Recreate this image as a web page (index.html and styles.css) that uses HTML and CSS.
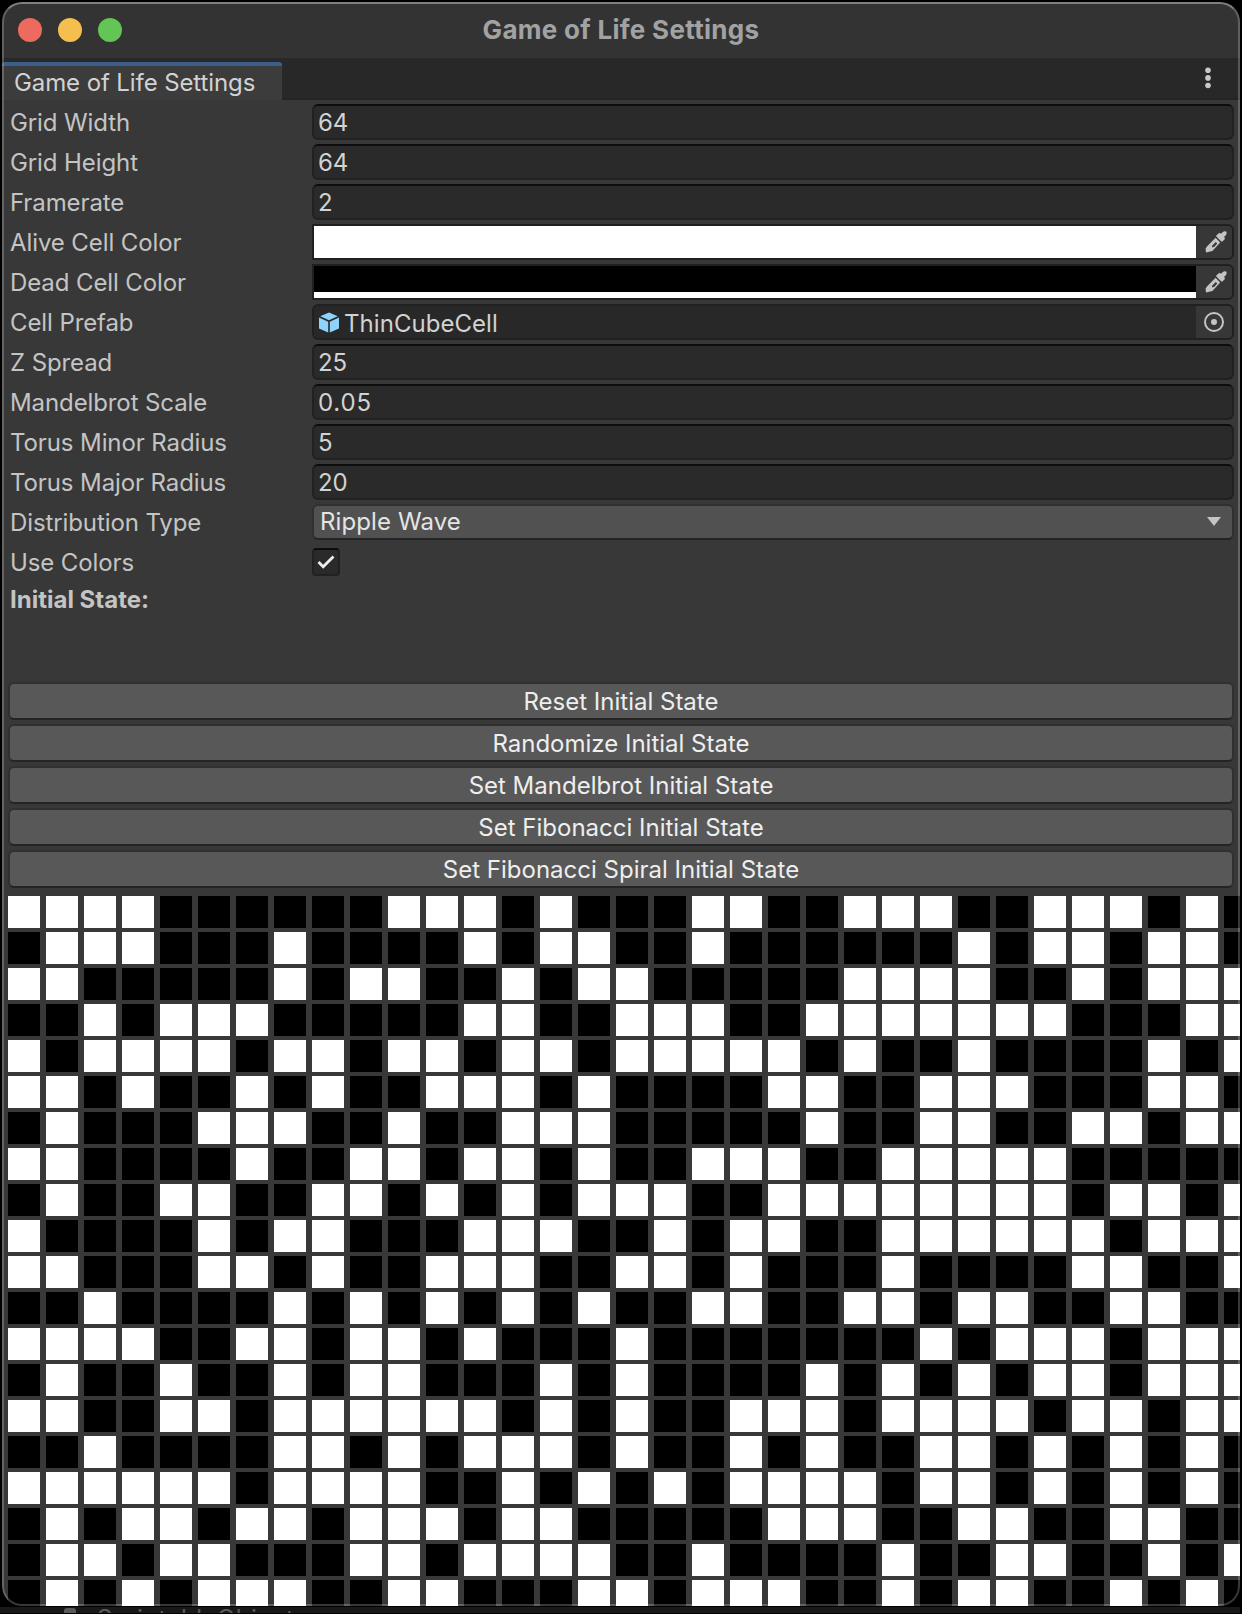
FILE: index.html
```html
<!DOCTYPE html>
<html lang="en">
<head>
<meta charset="utf-8">
<title>Game of Life Settings</title>
<link rel="stylesheet" href="styles.css">
</head>
<body>
<div class="window">
  <header class="titlebar">
    <div class="lights"><span class="light close"></span><span class="light minimize"></span><span class="light zoom"></span></div>
    <h1 class="title">Game of Life Settings</h1>
  </header>
  <nav class="tabs">
    <div class="tab">Game of Life Settings</div>
    <svg class="more" width="6" height="22" viewBox="0 0 6 22"><g fill="#c8c8c8"><circle cx="3" cy="3.3" r="2.8"/><circle cx="3" cy="10.9" r="2.8"/><circle cx="3" cy="18.5" r="2.8"/></g></svg>
  </nav>
  <main class="inspector">
    <div class="row"><label>Grid Width</label><div class="field">64</div></div>
    <div class="row"><label>Grid Height</label><div class="field">64</div></div>
    <div class="row"><label>Framerate</label><div class="field">2</div></div>
    <div class="row"><label>Alive Cell Color</label><div class="field picker"><span class="swatch alive"></span><span class="side"><svg class="dropper" width="22" height="22" viewBox="0 0 22 22"><use href="#dropper"/></svg></span></div></div>
    <div class="row"><label>Dead Cell Color</label><div class="field picker"><span class="swatch dead"></span><span class="side"><svg class="dropper" width="22" height="22" viewBox="0 0 22 22"><use href="#dropper"/></svg></span></div></div>
    <div class="row"><label>Cell Prefab</label><div class="field object">
      <svg class="cube" width="20" height="21" viewBox="0 0 20 21"><g fill="#8fd2fb"><path d="M10 0.4 18.8 4.3 10 8.2 1.2 4.3Z"/><path d="M0 5.6 9.2 9.8V20.6L0 16.6Z"/><path d="M20 5.6 10.8 9.8V20.6L20 16.6Z"/></g></svg>
      <span class="object-name">ThinCubeCell</span>
      <span class="side"><svg width="20" height="20" viewBox="0 0 20 20"><circle cx="10" cy="10" r="9" fill="none" stroke="#c4c4c4" stroke-width="2"/><circle cx="10" cy="10" r="3" fill="#c4c4c4"/></svg></span>
    </div></div>
    <div class="row"><label>Z Spread</label><div class="field">25</div></div>
    <div class="row"><label>Mandelbrot Scale</label><div class="field decimal">0.05</div></div>
    <div class="row"><label>Torus Minor Radius</label><div class="field">5</div></div>
    <div class="row"><label>Torus Major Radius</label><div class="field">20</div></div>
    <div class="row"><label>Distribution Type</label><div class="field dropdown"><span>Ripple Wave</span><svg width="14" height="9" viewBox="0 0 14 9"><path d="M0 0H14L7 9Z" fill="#c4c4c4"/></svg></div></div>
    <div class="row"><label>Use Colors</label><div class="check"><svg width="18" height="14" viewBox="0 0 18 14"><path d="M1.5 7 6.2 11.7 16.5 1.5" fill="none" stroke="#eee" stroke-width="2.8"/></svg></div></div>
    <h2 class="heading">Initial State:</h2>
    <div class="actions">
      <button>Reset Initial State</button>
      <button>Randomize Initial State</button>
      <button>Set Mandelbrot Initial State</button>
      <button>Set Fibonacci Initial State</button>
      <button>Set Fibonacci Spiral Initial State</button>
    </div>
  </main>
  <div class="cells" id="cells"></div>
</div>
<div class="behind"><span class="folder"></span><span class="asset">ScriptableObjects</span></div>
<svg class="defs" width="0" height="0"><defs><g id="dropper">
  <path d="M13.6 2.4 C14.6 1.6 15.4 2.2 16 2.8 L17.6 1.2 C18.6 0.2 20.2 0 21.2 0.8 C22 1.8 21.8 3.2 20.8 4.2 L19 6 C20 7 20.4 7.8 19.4 8.6 L18 10 C17.2 10.8 16.4 10.6 15.8 10 L11.8 6 C11 5.2 11 4.6 11.8 4Z" fill="#c4c4c4"/>
  <path d="M10.6 6.8 15.2 11.4 7.4 20 1 21.4 0.6 17.4 2.2 15.2Z M10.8 11 6.8 15 7.6 16.4 9.6 15.6 12.2 12.6Z" fill="#c4c4c4" fill-rule="evenodd"/>
</g></defs></svg>
<script src="cells.js"></script>
</body>
</html>
```
FILE: styles.css
```css
* { box-sizing: border-box; }

body {
  margin: 0;
  height: 1614px;
  padding: 2px 2px 0;
  overflow: hidden;
  background: #000;
  font-family: Inter, "Liberation Sans", sans-serif;
  font-size: 24px;
  letter-spacing: -0.1px;
  color: #c4c4c4;
}

.window {
  position: relative;
  width: 1238px;
  height: 1604px;
  display: flex;
  flex-direction: column;
  overflow: hidden;
  border-radius: 20px;
  background: #383838;
}

/* Translucent rim drawn over the window content */
.window::after {
  content: "";
  position: absolute;
  inset: 0;
  border: 2px solid rgba(255, 255, 255, 0.22);
  border-top-color: rgba(255, 255, 255, 0.38);
  border-radius: 20px;
}

.titlebar {
  display: grid;
  grid-template-columns: 1fr auto 1fr;
  align-items: center;
  flex: none;
  height: 56px;
  padding: 0 16px 2px;
  background: #333;
}

.lights { display: flex; gap: 16px; padding-top: 2px; }
.light { width: 24px; height: 24px; border-radius: 50%; }
.close { background: #ed6a5f; }
.minimize { background: #f5bf4f; }
.zoom { background: #62c555; }

.title {
  margin: 0;
  font-size: 26px;
  font-weight: 700;
  letter-spacing: 0.3px;
  color: #a2a2a2;
}

.tabs {
  display: flex;
  justify-content: space-between;
  align-items: flex-end;
  flex: none;
  height: 42px;
  background: #282828;
  box-shadow: inset 0 -2px #242424;
}

.tab {
  width: 280px;
  height: 38px;
  padding-left: 12px;
  line-height: 33px;
  border-top: 4px solid #3a5f8b;
  border-radius: 3px 3px 0 0;
  background: #3c3c3c;
  color: #d2d2d2;
}

.more { margin: 0 29px 11px 0; }

.inspector {
  flex: none;
  height: 796px;
  padding: 4px 6px 0;
}

.row {
  display: grid;
  grid-template-columns: 302px 1fr;
  align-items: center;
  height: 36px;
  margin: 0 0 4px 2px;
}

.field {
  display: flex;
  align-items: center;
  height: 36px;
  padding-left: 4px;
  border: 2px solid #212121;
  border-top-color: #0d0d0d;
  border-radius: 6px;
  background: #2a2a2a;
  color: #d2d2d2;
}

.decimal { letter-spacing: 0.8px; }

.picker {
  padding: 0;
  border-color: #202020;
  border-radius: 0 6px 6px 0;
}

.swatch { flex: 1; height: 32px; }
.alive { background: #fff; }
.dead { background: #000; border-bottom: 6px solid #fff; }

.side {
  display: flex;
  align-items: center;
  justify-content: center;
  width: 36px;
  height: 32px;
  border-radius: 0 4px 4px 0;
  background: #373737;
}

.dropper { margin: 0 0 1px 4px; }

.object { border-color: #202020; background: #282828; }
.cube { margin: 0 5px 0 1px; }
.object-name { flex: 1; padding-top: 2px; letter-spacing: 0.05px; }

.dropdown {
  justify-content: space-between;
  padding: 0 11px 1px 6px;
  border-color: #303030;
  border-bottom-color: #242424;
  background: #515151;
  color: #e4e4e4;
  letter-spacing: 0.1px;
}

.check {
  display: flex;
  align-items: center;
  justify-content: center;
  width: 28px;
  height: 28px;
  border: 2px solid #212121;
  border-top-color: #0d0d0d;
  border-radius: 4px;
  background: #2a2a2a;
}

.heading {
  margin: 0 0 0 2px;
  height: 98px;
  line-height: 32px;
  font-size: 24px;
  font-weight: 700;
  letter-spacing: 0;
}

.actions { display: flex; flex-direction: column; gap: 4px; }

.actions button {
  height: 38px;
  padding: 1px 0 0;
  border: 2px solid #303030;
  border-bottom-color: #242424;
  border-radius: 6px;
  background: #585858;
  color: #eee;
  font: inherit;
  letter-spacing: 0;
}

.cells {
  display: grid;
  grid-template-columns: repeat(33, 32px);
  grid-auto-rows: 32px;
  gap: 4px 6px;
  margin-left: 6px;
}

.cell { background: #000; }
.cell.on { background: #fff; }

/* Strip of the editor window visible below */
.behind {
  display: flex;
  align-items: flex-start;
  height: 6px;
  margin: 1px 0 0 -2px;
  padding-left: 64px;
  overflow: hidden;
  background: #181818;
}

.folder { width: 12px; height: 5px; margin-top: 1px; border-radius: 3px 3px 0 0; background: #5a5a5a; }
.asset { margin-left: 21px; line-height: 24px; font-size: 24px; letter-spacing: 0.5px; color: #5a5a5a; }
.defs { position: absolute; }
```
FILE: cells.js
```js
const rows = [
  "111100000011101000110011100111010",
  "011100010000101100100000010110110",
  "110000010110010110000011110010111",
  "001011100000110011100111111100011",
  "101111011011011011111010010000101",
  "110100101001110100001100111000110",
  "010001110010011100000100110011011",
  "110000100110110100111001111100000",
  "010011001101010111001111111101101",
  "100001011000111001011001111110111",
  "110001101001110011010001000011001",
  "001000010101010100110011011001100",
  "111100110110100010000000101110111",
  "010010010110001010000101010110111",
  "110011011111101010011101111011011",
  "001000011010111010010100110101010",
  "111111011110010101011110110101010",
  "010110110111011000001110011001100",
  "011011000110111100100001001100101",
  "010101110011000110111001011001010",
];

const grid = document.getElementById("cells");
for (const row of rows) {
  for (const state of row) {
    const cell = document.createElement("div");
    cell.className = state === "1" ? "cell on" : "cell";
    grid.append(cell);
  }
}
```
